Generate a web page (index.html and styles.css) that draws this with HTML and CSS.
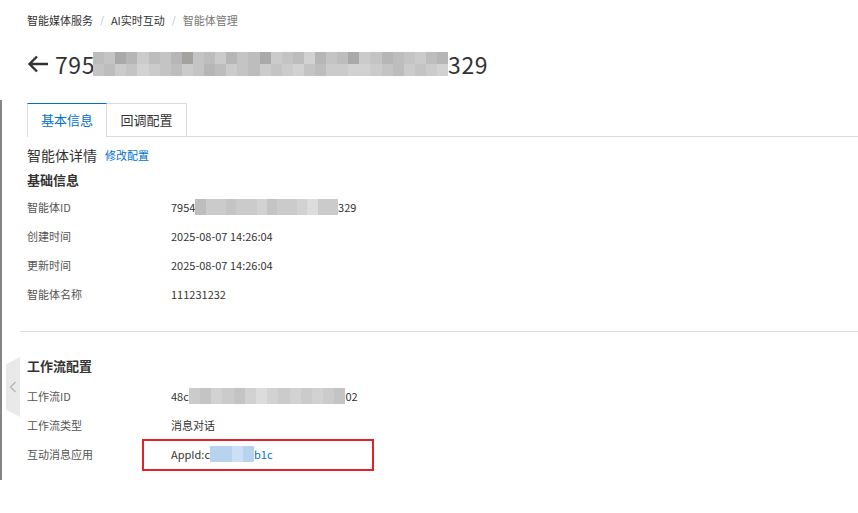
FILE: index.html
```html
<!DOCTYPE html>
<html lang="zh-CN">
<head>
    <meta charset="UTF-8">
    <meta name="viewport" content="width=device-width, initial-scale=1.0">
    <title>智能体管理</title>
    <link rel="stylesheet" href="styles.css">
</head>
<body>
    <div class="edge"></div>

    <div class="page">
        <!-- 面包屑 -->
        <div class="crumbs">
            <span class="crumb">智能媒体服务</span>
            <span class="sep">/</span>
            <span class="crumb">AI实时互动</span>
            <span class="sep">/</span>
            <span class="crumb current">智能体管理</span>
        </div>

        <div class="title">
            <svg class="back" width="22" height="18" viewBox="0 0 22 18">
                <path d="M21 9H2.5M10 1.5L2.5 9L10 16.5" fill="none" stroke="#333" stroke-width="2.4"/>
            </svg>
            <span>795</span><span class="mosaic big" data-cells="4,3,6,5,2,4,3,5,7,3,4,2,5,3,4,6,2,3,4,1,5,3,4,6,2,3,5,4,3,2,4,5|3,4,2,3,1,2,3,4,2,3,5,4,2,3,4,2,3,2,1,3,4,2,2,1,1,2,3,4,2,3,2,1"></span><span>329</span>
        </div>

        <div class="tabs">
            <div class="tab active">基本信息</div>
            <div class="tab">回调配置</div>
            <div class="tab-rest"></div>
        </div>

        <div class="detail-head">
            <span class="detail-title">智能体详情</span>
            <a class="link">修改配置</a>
        </div>

        <div class="section-title">基础信息</div>
        <div class="row">
            <div class="label">智能体ID</div>
            <div class="value">7954<span class="mosaic" data-cells="4,2,2,3,2,2,1,3,2,2,1,0,2,2"></span>329</div>
        </div>
        <div class="row">
            <div class="label">创建时间</div>
            <div class="value">2025-08-07 14:26:04</div>
        </div>
        <div class="row">
            <div class="label">更新时间</div>
            <div class="value">2025-08-07 14:26:04</div>
        </div>
        <div class="row">
            <div class="label">智能体名称</div>
            <div class="value">111231232</div>
        </div>

        <div class="divider"></div>

        <div class="side-toggle">
            <svg width="8" height="12" viewBox="0 0 8 12"><path d="M6.5 1L1.5 6L6.5 11" fill="none" stroke="#b5b5b5" stroke-width="1.3"/></svg>
        </div>

        <div class="section-title sec2">工作流配置</div>
        <div class="row">
            <div class="label">工作流ID</div>
            <div class="value">48c<span class="mosaic wide" data-cells="2,3,1,2,3,1,0,1,2,1,2,1,2,3"></span>02</div>
        </div>
        <div class="row">
            <div class="label">工作流类型</div>
            <div class="value">消息对话</div>
        </div>
        <div class="row marked">
            <div class="label">互动消息应用</div>
            <div class="value">
                AppId:c<span class="mosaic blue" data-cells="0,0,1,0"></span><span class="app-tail">b1c</span>
            </div>
            <span class="mark"></span>
        </div>
    </div>

    <script>
    // 打码色块
    var grays = ['#dcdcdc', '#d2d2d2', '#cbcbcb', '#c4c4c4', '#bdbdbd', '#b6b6b6', '#a9a9a9', '#a3a29f'];
    var blues = ['#b7d4ef', '#cde0f3'];
    document.querySelectorAll('.mosaic').forEach(function (box) {
        var rows = box.dataset.cells.split('|');
        var list = box.classList.contains('blue') ? blues : grays;
        rows.forEach(function (r) {
            var line = document.createElement('span');
            line.className = 'mrow';
            r.split(',').forEach(function (n) {
                var c = document.createElement('i');
                c.style.background = list[+n];
                line.appendChild(c);
            });
            box.appendChild(line);
        });
    });
    </script>
</body>
</html>
```

FILE: styles.css
```css
html, body {
    margin: 0;
    padding: 0;
    background: #fff;
    color: #333;
    font-family: "Noto Sans CJK SC", "Noto Sans", sans-serif;
}
.edge {
    position: absolute;
    left: 0;
    top: 100px;
    width: 2px;
    height: 380px;
    background: #858585;
}
.page {
    position: relative;
    padding-left: 27px;
    padding-bottom: 40px;
}
.crumbs {
    height: 40px;
    line-height: 40px;
    font-size: 11px;
    display: flex;
    gap: 7px;
}
.crumb {
    color: #333;
}
.crumb.current {
    color: #777;
}
.sep {
    color: #bbb;
    font-size: 10px;
}
.title {
    height: 48px;
    display: flex;
    align-items: center;
    font-size: 23px;
    color: #333;
    letter-spacing: 0.6px;
}
.back {
    margin-right: 6px;
}

/* 打码 */
.mosaic {
    display: inline-flex;
    flex-direction: column;
    vertical-align: middle;
}
.mrow {
    display: flex;
}
.mrow i {
    display: block;
    width: 10.2px;
    height: 16px;
}
.mosaic.wide .mrow i {
    width: 11.2px;
}
.mosaic.big {
    margin-left: -2px;
}
.mosaic.big .mrow i {
    width: 11.1px;
    height: 12px;
}
.mosaic.blue .mrow i {
    width: 11px;
}

.tabs {
    margin-top: 15px;
    display: flex;
    height: 34px;
}
.tab {
    width: 80px;
    box-sizing: border-box;
    text-align: center;
    line-height: 32px;
    font-size: 13px;
    color: #333;
    border: 1px solid #dcdcdc;
    border-left: none;
}
.tab.active {
    color: #0070cc;
    border-left: 1px solid #dcdcdc;
    border-top: 1px solid #0070cc;
    border-bottom: none;
}
.tab-rest {
    flex: 1;
    border-bottom: 1px solid #dcdcdc;
}
.detail-head {
    margin-top: 6px;
    height: 24px;
    display: flex;
    align-items: center;
    gap: 8px;
}
.detail-title {
    font-size: 14px;
}
.link {
    font-size: 11px;
    color: #0070cc;
}
.section-title {
    margin-top: 3px;
    line-height: 20px;
    font-size: 13px;
    font-weight: bold;
    color: #333;
}
.row {
    display: flex;
    height: 29px;
    align-items: center;
    font-size: 11px;
}
.section-title + .row {
    margin-top: 2px;
}
.section-title.sec2 {
    margin-top: 24px;
}
.section-title.sec2 + .row {
    margin-top: 5px;
}
.label {
    width: 144px;
    color: #555;
}
.value {
    display: flex;
    align-items: center;
    color: #333;
}
.app-tail {
    color: #0070cc;
}
.row.marked {
    position: relative;
}
.mark {
    position: absolute;
    left: 115px;
    top: 0;
    width: 228px;
    height: 28px;
    border: 2px solid #e3202b;
}
.divider {
    margin: 23px 0 0 -7px;
    border-top: 1px solid #dedede;
}
.side-toggle {
    position: absolute;
    left: 6px;
    top: 357px;
    width: 14px;
    height: 60px;
    background: #e9e9e9;
    clip-path: polygon(0 12%, 100% 0, 100% 100%, 0 88%);
    display: flex;
    align-items: center;
    justify-content: center;
}
```
